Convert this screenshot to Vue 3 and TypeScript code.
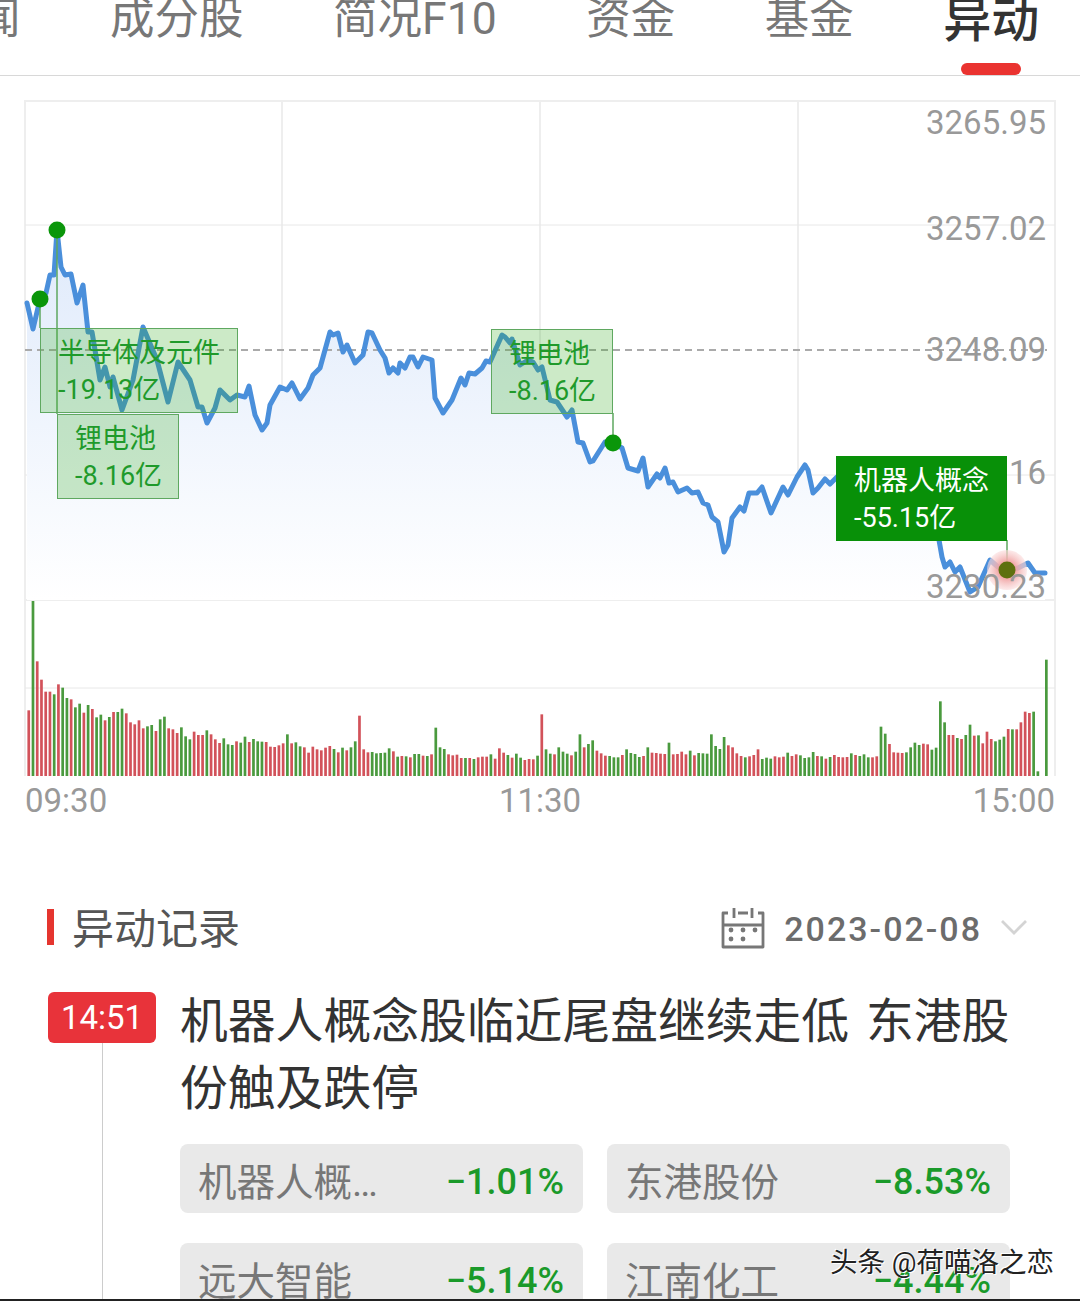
<script setup lang="ts">
interface Tag {
  name: string
  value: string
  left: number
  top: number
  width: number
  solid?: boolean
}

const tabs = ['闻', '成分股', '简况F10', '资金', '基金', '异动']

const axisLabels = [
  { text: '3265.95', y: 123 },
  { text: '3257.02', y: 229 },
  { text: '3248.09', y: 350 },
  { text: '3239.16', y: 473 },
  { text: '3230.23', y: 587 },
]

const tags: Tag[] = [
  { name: '半导体及元件', value: '-19.13亿', left: 40, top: 328, width: 198 },
  { name: '锂电池', value: '-8.16亿', left: 57, top: 414, width: 122 },
  { name: '锂电池', value: '-8.16亿', left: 491, top: 329, width: 122 },
  { name: '机器人概念', value: '-55.15亿', left: 836, top: 456, width: 171, solid: true },
]

const stocks = [
  { name: '机器人概…', change: '−1.01%' },
  { name: '东港股份', change: '−8.53%' },
  { name: '远大智能', change: '−5.14%' },
  { name: '江南化工', change: '−4.44%' },
]

// price line traced from the chart, page coordinates
const linePoints =
  '27,303 33,329 40,299 46,293 50,275 54,275 57,230 61,267 65,275 71,274 77,303 83,285 88,332 92,332 100,380 105,367 110,387 113,377 122,410 133,380 143,327 157,360 168,402 178,362 190,380 198,407 202,407 207,423 215,408 220,390 230,400 237,395 245,397 249,386 255,415 262,430 267,423 270,405 280,387 287,390 292,383 300,399 308,388 313,375 320,368 330,332 333,335 338,333 343,352 347,345 355,363 363,355 368,332 372,333 380,350 385,358 389,373 393,368 398,373 400,363 405,368 410,357 413,357 418,367 423,357 432,360 435,398 443,413 452,400 461,378 465,385 469,373 475,374 482,368 486,361 490,362 502,335 505,337 510,343 512,339 520,365 528,360 533,362 538,370 542,367 550,400 557,402 567,417 572,410 578,442 583,443 590,462 593,461 605,442 613,443 622,448 628,468 638,471 643,458 648,487 657,474 660,478 665,468 669,483 673,482 678,492 687,488 692,493 698,492 703,503 708,505 712,517 718,522 724,552 728,545 732,518 740,507 744,511 749,493 757,493 762,487 771,513 783,487 788,495 797,477 805,465 808,470 813,493 818,488 825,479 830,484 837,477 850,470 870,460 900,480 925,500 939,540 942,557 945,567 950,562 955,572 960,567 970,592 978,587 990,560 998,567 1007,570 1018,568 1028,563 1035,573 1045,573'

const areaPoints = `27,600 ${linePoints} 1045,600`

// volume bars: colour + top of bar in 3x crop units, 557 = baseline
const volumeData =
  'r360 g32 r213 r268 r304 r304 g312 r282 g292 g323 r327 g351 g340 r367 g344 r356 g381 g373 r390 g380 r365 g365 g355 r369 r396 r402 r390 r414 g408 g404 r422 g387 g379 r414 r417 r428 g411 g438 g447 r424 r434 r434 g420 r432 r447 r458 g444 g462 g464 r453 g457 g439 r455 g446 g453 g454 r455 r469 r470 r465 r459 g432 r459 g456 g468 r471 r487 r469 r477 r480 r472 r467 g476 r486 g472 r480 g471 g453 r376 r477 r486 g485 g489 g488 g487 g474 r483 g499 r497 g498 r501 g491 g491 r496 g497 r492 g412 g471 g476 r492 r495 r493 r503 g503 r503 g506 r501 r499 r499 g492 r505 r474 r487 g494 r502 g490 g502 r509 r506 r507 g496 r372 g477 g490 r492 g471 g484 g490 r495 g484 g432 r471 g461 g450 r481 r489 r496 g497 g501 g501 r494 g477 g488 g491 g500 r497 g471 r487 r488 r490 r491 g457 r492 r491 r484 r492 g481 r495 g488 g489 g490 g432 g467 g476 g440 r465 r471 r489 r497 g501 r498 r494 r477 g506 g502 g505 r498 r501 r499 g487 r497 r492 g495 g503 g501 g485 r497 g498 r505 g500 r494 r500 r501 r500 g489 r494 g497 g492 g501 r501 r498 g409 g430 r461 r486 r487 r488 g486 g471 g457 g464 r460 r462 g478 g472 g333 g396 r434 r434 g443 r446 g434 g403 r436 g435 r459 r424 r446 g453 g448 g439 r416 g417 r417 r396 r364 r368 g364 g543 g557 g208'

const volumeItems = volumeData.split(' ')
const barPitch = (1045 - 27.4) / (volumeItems.length - 1)

const bars = volumeItems.map((item, i) => {
  const height = (557 - Number(item.slice(1))) / 3
  return {
    x: 27.4 + i * barPitch,
    y: 776 - height,
    height,
    color: item[0] === 'r' ? '#d2525a' : '#4a9a3e',
  }
})
</script>

<template>
  <div class="page">
    <nav class="tabs">
      <span
        v-for="(tab, i) in tabs"
        :key="tab"
        class="tab"
        :class="{ active: i === tabs.length - 1 }"
        >{{ tab }}</span
      >
    </nav>

    <section class="chart">
      <svg class="chart-svg" width="1080" height="700" viewBox="0 76 1080 700">
        <defs>
          <linearGradient id="area" gradientUnits="userSpaceOnUse" x1="0" y1="230" x2="0" y2="600">
            <stop offset="0" stop-color="#dfeafb" />
            <stop offset="1" stop-color="#ffffff" />
          </linearGradient>
          <radialGradient id="halo">
            <stop offset="0.35" stop-color="#ef9c9c" />
            <stop offset="1" stop-color="#fbdcdc" stop-opacity="0.6" />
          </radialGradient>
        </defs>

        <g stroke="#eeeeee" stroke-width="2" fill="none">
          <path d="M25 776V101H1055V776" />
          <path d="M282 101V600M540 101V600M798 101V600" />
          <path d="M25 600H1055" />
        </g>
        <path d="M25 225H1055M25 475H1055M25 688H1055" stroke="#e8e8e8" fill="none" />

        <polygon :points="areaPoints" fill="url(#area)" />
        <path d="M25 350H1047" stroke="#aaaaaa" stroke-width="2" stroke-dasharray="7 5" fill="none" />
        <polyline
          :points="linePoints"
          fill="none"
          stroke="#4a8fdb"
          stroke-width="5"
          stroke-linejoin="round"
          stroke-linecap="round"
        />

        <g stroke="#5fa860" stroke-width="1.5">
          <path d="M57 230V414M40 299V328M613 413V443M1007 540V570" />
        </g>
        <circle cx="1007" cy="570" r="20" fill="url(#halo)" />
        <g fill="#0a960a">
          <circle cx="57" cy="230" r="8.5" />
          <circle cx="40" cy="299" r="8.5" />
          <circle cx="613" cy="443" r="8.5" />
        </g>
        <circle cx="1007" cy="570" r="8.5" fill="#5d700f" />

        <rect
          v-for="(bar, i) in bars"
          :key="i"
          :x="bar.x"
          :y="bar.y"
          width="2.7"
          :height="bar.height"
          :fill="bar.color"
        />
      </svg>

      <span
        v-for="label in axisLabels"
        :key="label.text"
        class="axis-label"
        :style="{ top: `${label.y - 76 - 20}px` }"
        >{{ label.text }}</span
      >

      <div
        v-for="tag in tags"
        :key="tag.left"
        class="tag"
        :class="{ solid: tag.solid }"
        :style="{ left: `${tag.left}px`, top: `${tag.top - 76}px`, width: `${tag.width}px` }"
      >
        <div>{{ tag.name }}</div>
        <div>{{ tag.value }}</div>
      </div>
    </section>

    <div class="time-axis">
      <span>09:30</span>
      <span>11:30</span>
      <span>15:00</span>
    </div>

    <header class="records-head">
      <h2>异动记录</h2>
      <div class="date-picker">
        <svg class="calendar" width="44" height="42" viewBox="0 0 44 42" fill="none">
          <path
            d="M7 6H2V40H42V6H37M17 6H27M2 18H42"
            stroke="#777"
            stroke-width="2.8"
            stroke-linejoin="round"
          />
          <path d="M13 1V11M31 1V11" stroke="#777" stroke-width="2.8" />
          <g fill="#777">
            <circle cx="10" cy="23" r="2.4" />
            <circle cx="22" cy="23" r="2.4" />
            <circle cx="34" cy="23" r="2.4" />
            <circle cx="10" cy="32" r="2.4" />
            <circle cx="22" cy="32" r="2.4" />
          </g>
        </svg>
        <span class="date">2023-02-08</span>
        <svg class="chevron" width="28" height="16" viewBox="0 0 28 16" fill="none">
          <path d="M2 2L14 14L26 2" stroke="#d4d4d4" stroke-width="2.8" />
        </svg>
      </div>
    </header>

    <article class="event">
      <div class="timeline">
        <span class="time-badge">14:51</span>
        <span class="timeline-line"></span>
      </div>
      <div class="event-body">
        <h3>机器人概念股临近尾盘继续走低 东港股份触及跌停</h3>
        <div class="stocks">
          <div v-for="stock in stocks" :key="stock.name" class="stock">
            <span class="stock-name">{{ stock.name }}</span>
            <span class="stock-change">{{ stock.change }}</span>
          </div>
        </div>
      </div>
    </article>

    <div class="watermark">头条 @荷喵洛之恋</div>
    <div class="bottom-edge"></div>
  </div>
</template>

<style scoped>
.page {
  position: relative;
  width: 1080px;
  height: 1301px;
  overflow: hidden;
  background: #fff;
  font-family: Roboto, 'Noto Sans CJK SC', sans-serif;
}

.tabs {
  display: flex;
  gap: 89.5px;
  height: 75px;
  margin-left: -24px;
  margin-right: -24px;
  border-bottom: 1px solid #d8d8d8;
  align-items: flex-start;
}

.tab {
  position: relative;
  margin-top: -5px;
  font-size: 44.5px;
  line-height: 48px;
  color: #777;
  white-space: nowrap;
}

.tab.active {
  margin-top: -3px;
  font-size: 48px;
  font-weight: 500;
  color: #333;
}

.tab.active::after {
  content: '';
  position: absolute;
  left: 18px;
  top: 66px;
  width: 60px;
  height: 12px;
  border-radius: 6px;
  background: #ea3330;
}

.chart {
  position: relative;
  height: 700px;
}

.chart-svg {
  display: block;
}

.axis-label {
  position: absolute;
  right: 34px;
  font-size: 33px;
  line-height: 40px;
  color: #999;
}

.tag {
  position: absolute;
  box-sizing: border-box;
  height: 85px;
  padding: 6px 0 0 17px;
  border: 1px solid #5fa860;
  background: rgba(50, 170, 30, 0.25);
  color: #1f9a2b;
  font-size: 27px;
  line-height: 37px;
  white-space: nowrap;
}

.tag.solid {
  background: #089008;
  border-color: #089008;
  color: #fff;
}

.time-axis {
  display: flex;
  justify-content: space-between;
  padding: 4px 25px 0;
  font-size: 33px;
  line-height: 42px;
  color: #999;
}

.records-head {
  display: flex;
  align-items: center;
  justify-content: space-between;
  height: 40px;
  margin-top: 87px;
  padding: 0 52px 0 47px;
}

h2 {
  display: flex;
  align-items: flex-start;
  gap: 18px;
  align-self: flex-start;
  margin: 0;
  font-size: 42px;
  font-weight: 400;
  line-height: 42px;
  color: #555;
}

h2::before {
  content: '';
  width: 7px;
  height: 36px;
  background: #e5352f;
}

.date-picker {
  display: flex;
  align-items: center;
}

.calendar {
  margin: -2px 0 0 1px;
}

.date {
  margin-left: 19px;
  font-size: 34px;
  font-weight: 500;
  letter-spacing: 2px;
  color: #6c6c6c;
}

.chevron {
  margin: -4px 0 0 18px;
}

.event {
  display: flex;
  margin-top: 43px;
  padding-left: 48px;
}

.timeline {
  display: flex;
  flex: none;
  flex-direction: column;
  align-items: center;
  width: 108px;
  height: 320px;
}

.time-badge {
  width: 100%;
  height: 51px;
  border-radius: 6px;
  background: #e8333a;
  color: #fff;
  font-size: 33px;
  line-height: 51px;
  text-align: center;
}

.timeline-line {
  flex: 1;
  width: 1px;
  background: #ccc;
}

.event-body {
  width: 830px;
  margin-left: 24px;
}

h3 {
  margin: -3px 0 0;
  font-size: 47.8px;
  font-weight: 400;
  line-height: 67px;
  word-spacing: 5px;
  color: #333;
}

.stocks {
  display: grid;
  grid-template-columns: 403px 403px;
  gap: 30px 24px;
  margin-top: 21px;
}

.stock {
  display: flex;
  align-items: center;
  justify-content: space-between;
  height: 69px;
  padding: 0 19px;
  border-radius: 8px;
  background: #e9e9e9;
}

.stock-name {
  margin-left: -1px;
  font-size: 38.5px;
  color: #777;
}

.stock-change {
  margin-top: 6px;
  font-size: 36px;
  font-weight: 500;
  color: #1a9a2a;
}

.watermark {
  position: absolute;
  left: 830px;
  top: 1246px;
  font-size: 27.5px;
  line-height: 34px;
  color: #222;
  white-space: nowrap;
  text-shadow:
    1px 1px 0 #fff,
    -1px -1px 0 #fff;
}

.bottom-edge {
  position: absolute;
  left: 0;
  right: 0;
  bottom: 0;
  height: 2px;
  background: #222;
}
</style>
